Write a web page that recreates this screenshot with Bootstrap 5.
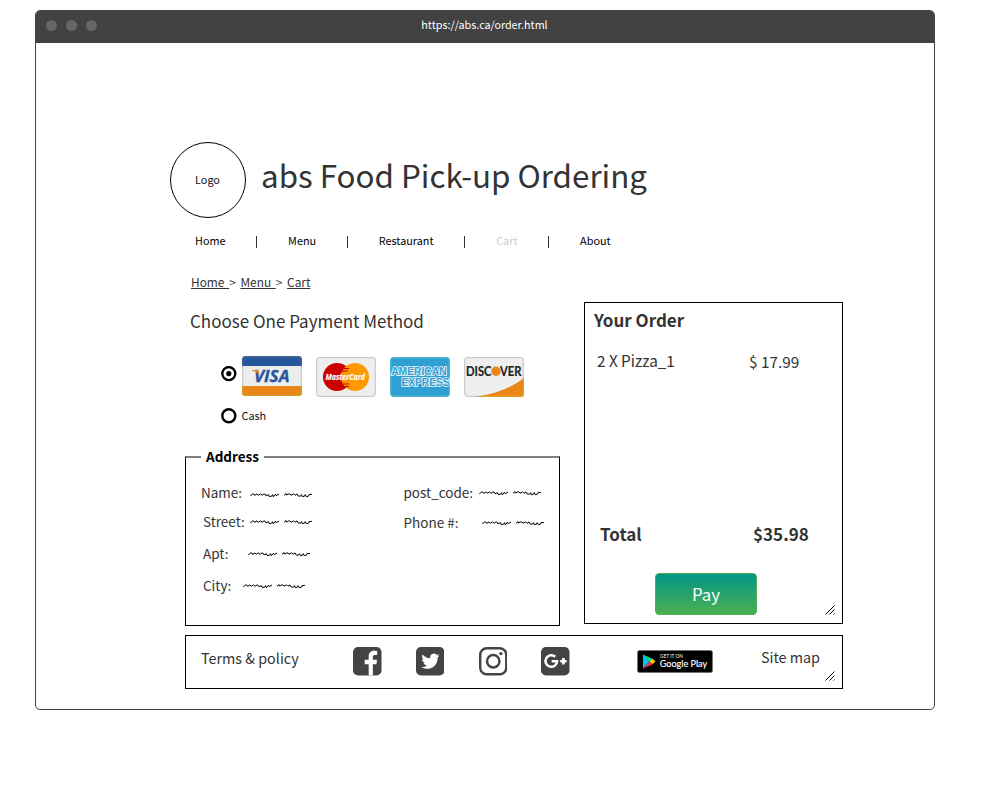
<!DOCTYPE html>
<html lang="en">
<head>
<meta charset="utf-8">
<meta name="viewport" content="width=device-width, initial-scale=1">
<title>abs Food Pick-up Ordering</title>
<link href="https://cdn.jsdelivr.net/npm/bootstrap@5.3.0/dist/css/bootstrap.min.css" rel="stylesheet">
<style>
body{font-family:"Noto Sans CJK SC","Noto Sans",sans-serif;color:#333;background:#fff;padding:10px 0 0 35px}
.browser{width:900px;height:700px;border:1px solid #424242;border-radius:5px;overflow:hidden}
.titlebar{height:32px;background:#424242;color:#fff;font-size:10.75px;line-height:16px;padding:0 10px}
.titlebar .dots{width:80px;gap:9px;margin:-3px 0 0}
.titlebar i{width:11px;height:11px;border-radius:50%;background:#666}
.titlebar .address-bar{padding-right:81px;margin-top:-4px}
.page{padding:99px 91px 0 149px}
.masthead{margin-left:-15px;height:76px}
.logo{width:76px;height:76px;border:1px solid #000;font-size:10.85px;color:#111;padding:0 1px 2px 0}
.masthead h1{font-size:31.35px;line-height:40px;margin:13px 0 0 15px;font-weight:400;white-space:nowrap;color:#333}
.main-links{height:18px;margin-top:14px;padding-left:10px;gap:30.8px;font-size:10.85px;line-height:18px}
.main-links a{color:#000;margin-top:-2px}
.main-links a.off{color:#ccc}
.main-links i{width:1px;height:12px;background:#333;margin-top:1px}
.crumbs{margin-top:24px;padding-left:6px;font-size:11.9px;line-height:16px;height:16px;white-space:pre;word-spacing:2px}
.crumbs a{color:#333;text-decoration:underline;text-underline-offset:1px}
.columns{margin-top:12px;gap:24px;height:324px}
.left{width:375px;padding-top:7px}
h2{font-size:17px;line-height:24px;margin:0;color:#333;font-weight:400}
.left h2{padding-left:5px}
.pay-row{padding-left:36px}
.methods{margin-top:23px;height:41px}
.methods .radio{margin:10px 5px 0 0}
.methods .cc{width:60px;height:40px;margin-right:14px;overflow:visible}
.methods .lower{margin-top:1px}
.cash{margin-top:10px;height:17px;gap:4.5px;font-size:10.85px;line-height:16px;color:#111}
.addr{margin-top:32px;height:170px;border:1px solid #000;border-top:2px solid gray;padding:0 15px}
.addr .legend-text{background:#fff;font-size:13.5px;line-height:20px;font-weight:700;color:#000;padding:0 5px;width:63px;margin-top:-12px}
.fields{font-size:13.5px;line-height:20px;padding-top:16px}
.fields .colA{width:204px}
.fields .f1{height:29px}
.fields .f1 span{width:49px}
.fields .f2{margin-left:2px;height:32px}
.fields .f2 span{width:47px}
.fields .f3 span{width:45px}
.fields .f4 span{width:40px}
.fields .f5{height:30px}
.fields .f5 span{width:75.5px}
.fields .f6 span{width:78.5px}
.scribble{width:62px;height:6px;margin-top:8px}
.f1 .scribble{margin-top:10px}
.order{width:259px;height:322px;border:1px solid #000;padding:5px 7px 0 9px}
.order h2,.total{font-weight:700}
.item{margin-top:16px;padding-left:3px;font-size:15.3px;line-height:24px}
.item span:first-child{width:152px}
.item span:last-child{margin-top:1px}
.total{margin-top:149px;padding-left:6px;font-size:17.05px;line-height:24px}
.total span:first-child{width:153px}
.pay-btn,.pay-btn:hover{width:102px;height:42px;margin:27px 0 0 61px;padding:0;border:1px solid #4caf50;border-radius:4px;background:linear-gradient(#009688,#4caf50);color:#fff;font-size:16.8px;line-height:40px}
.grip{width:10px;height:10px}
.foot{margin-top:9px;height:54px;border:1px solid #000;padding-left:15px;font-size:14.35px;line-height:24px}
.foot .terms{width:152px;margin-top:10px}
.foot .social{gap:34.3px;margin-top:11px}
.foot .social svg{width:28.5px;height:28.5px}
.foot .gplay{width:76px;height:23px;margin:13.5px 0 0 67px}
.foot .sitemap{margin:9px 0 0 48px;width:64px}
.foot .grip{margin-top:34.5px}
</style>
</head>
<body>
<svg class="d-none">
  <symbol id="scrib" viewBox="0 0 62 6"><g fill="none" stroke="#000" stroke-width="1" stroke-linecap="round" stroke-linejoin="round">
    <path d="M.6 3.500 2.800 1.900 4 2.200 4.600 3.400 7 1.900 8.300 3.300 10.500 1.900 12 3.300 14 1.900 15.500 2.500 16 3.900 18.300 2.600 19 4.400 21.500 4.300 22.600 2.600 23.300 4.800 25.500 2.200 26.200 3.700 28.700 2.200"/>
    <path d="M34.300 3.100 36 1.500 36.600 3.100 38.500 1.900 40 2 41 3.300 43.500 1.800 45 3.300 47 1.900 48.200 4 50.500 4.200 51.600 2.600 52.300 4.700 54.500 4.200 55.200 2.600 56.300 4.700 58.300 4.300 59 2.600 61.500 2.400"/></g></symbol>
  <symbol id="gripmark" viewBox="0 0 10 10"><path d="M.5 9.500l9-9M4.500 9.500l5-5M8.500 9.500l1-1" stroke="#000" fill="none"/></symbol>
</svg>
<div class="browser">
  <div class="titlebar d-flex align-items-center">
    <div class="dots d-flex"><i></i><i></i><i></i></div>
    <div class="address-bar flex-grow-1 text-center">https://abs.ca/order.html</div>
  </div>
  <div class="page">
    <header class="masthead d-flex">
      <div class="logo rounded-circle d-flex align-items-center justify-content-center">Logo</div>
      <h1>abs Food Pick-up Ordering</h1>
    </header>
    <nav class="main-links d-flex align-items-center">
      <a class="text-decoration-none" href="#">Home</a><i></i>
      <a class="text-decoration-none" href="#">Menu</a><i></i>
      <a class="text-decoration-none" href="#">Restaurant</a><i></i>
      <a class="text-decoration-none off" href="#">Cart</a><i></i>
      <a class="text-decoration-none" href="#">About</a>
    </nav>
    <nav class="crumbs"><a href="#">Home </a>&gt; <a href="#">Menu </a>&gt; <a href="#">Cart</a></nav>

    <main class="columns d-flex align-items-start">
      <section class="left">
        <h2>Choose One Payment Method</h2>
        <div class="methods pay-row d-flex align-items-start">
          <svg class="radio flex-shrink-0" width="16" height="16" viewBox="0 0 16 16"><circle cx="7.8" cy="7.6" r="6.5" fill="#fff" stroke="#000" stroke-width="2.4"/><circle cx="7.8" cy="7.6" r="2.6"/></svg>
          <svg class="cc flex-shrink-0" viewBox="0 0 60 40"><rect width="60" height="40" rx="3.5" fill="#ededed"/><path d="M0 10V3.5Q0 0 3.5 0h53Q60 0 60 3.5V10z" fill="#26569b"/><path d="M0 30h60v6.500q0 3.500-3.500 3.500h-53Q0 40 0 36.500z" fill="#ea8618"/><rect x=".7" y=".7" width="58.600" height="38.600" rx="3" fill="none" stroke="#888" stroke-opacity=".3" stroke-width="1.400"/><path d="M.7 30v6.500q0 2.800 2.800 2.800h53q2.800 0 2.800-2.800V30" fill="none" stroke="#d99c1c" stroke-width="1.200"/><text x="12" y="25.700" textLength="35.500" lengthAdjust="spacingAndGlyphs" font-family="Open Sans,sans-serif" font-size="16.500" font-weight="700" font-style="italic" fill="#26569b" stroke="#26569b" stroke-width=".3">VISA</text><path d="M9.800 14h5.500q1.200 0 1.600 1.500l.8 4q-2-3.800-7.900-5.100z" fill="#ea8618"/></svg>
          <svg class="cc lower flex-shrink-0" viewBox="0 0 60 40"><rect x=".7" y=".7" width="58.600" height="38.600" rx="3" fill="#eee" stroke="#ccc" stroke-width="1.300"/><circle cx="21" cy="20" r="14" fill="#c00"/><circle cx="39" cy="20" r="14" fill="#f90"/><path d="M27 11.500h6M26 14h6M26 27h7M27 29.500h6" stroke="#c00" stroke-width="1.200"/><text x="9.500" y="23.300" textLength="39.500" lengthAdjust="spacingAndGlyphs" font-family="Open Sans,sans-serif" font-size="9.600" font-weight="700" font-style="italic" fill="#fff" stroke="#fff" stroke-width=".2">MasterCard</text></svg>
          <svg class="cc lower flex-shrink-0" viewBox="0 0 60 40"><rect x=".7" y=".7" width="58.600" height="38.600" rx="3" fill="#309fd1" stroke="#49b7cf" stroke-width="1.400"/><g font-family="Liberation Sans,sans-serif" font-weight="700" font-size="10.500" fill="#309fd1" stroke="#eef8fc" stroke-width="1.700" paint-order="stroke"><text x="1.200" y="18" textLength="55.500" lengthAdjust="spacingAndGlyphs">AMERICAN</text><text x="11.500" y="29" textLength="48" lengthAdjust="spacingAndGlyphs">EXPRESS</text></g></svg>
          <svg class="cc lower flex-shrink-0 me-0" viewBox="0 0 60 40"><rect x=".7" y=".7" width="58.600" height="38.600" rx="3" fill="#eee" stroke="#ccc" stroke-width="1.300"/><path d="M11 40Q42 35.500 60 21v15.500q0 3.500-3.500 3.500z" fill="#ea8618"/><path d="M15 39.400h41.500q2.900 0 2.900-2.900V22" fill="none" stroke="#e0a51e"/><circle cx="32" cy="14.300" r="4.700" fill="#ea8618"/><g font-family="Lato,sans-serif" font-size="12.500" font-weight="700" fill="#222" stroke="#222" stroke-width=".2"><text x="2" y="18.700" textLength="25.500" lengthAdjust="spacingAndGlyphs">DISC</text><text x="36" y="18.700" textLength="21.500" lengthAdjust="spacingAndGlyphs">VER</text></g></svg>
        </div>
        <div class="cash pay-row d-flex"><svg width="16" height="17" viewBox="0 0 16 17"><circle cx="7.800" cy="8.700" r="6.500" fill="#fff" stroke="#000" stroke-width="2.400"/></svg><span>Cash</span></div>
        <div class="addr">
          <div class="legend-text">Address</div>
          <div class="fields d-flex">
            <div class="colA">
              <div class="f1 d-flex"><span>Name:</span><svg class="scribble"><use href="#scrib"/></svg></div>
              <div class="f2 d-flex"><span>Street:</span><svg class="scribble"><use href="#scrib"/></svg></div>
              <div class="f2 f3 d-flex"><span>Apt:</span><svg class="scribble"><use href="#scrib"/></svg></div>
              <div class="f2 f4 d-flex"><span>City:</span><svg class="scribble"><use href="#scrib"/></svg></div>
            </div>
            <div>
              <div class="f5 d-flex"><span>post_code:</span><svg class="scribble"><use href="#scrib"/></svg></div>
              <div class="f6 d-flex"><span>Phone #:</span><svg class="scribble"><use href="#scrib"/></svg></div>
            </div>
          </div>
        </div>
      </section>
      <aside class="order">
        <h2>Your Order</h2>
        <div class="item d-flex"><span>2 X Pizza_1</span><span>$ 17.99</span></div>
        <div class="total d-flex"><span>Total</span><span>$35.98</span></div>
        <div class="d-flex justify-content-between">
          <button class="btn pay-btn" type="button">Pay</button>
          <svg class="grip align-self-end"><use href="#gripmark"/></svg>
        </div>
      </aside>
    </main>

    <footer class="foot d-flex align-items-start">
      <span class="terms">Terms &amp; policy</span>
      <div class="social d-flex">
        <svg viewBox="0 0 28 28"><rect width="28" height="28" rx="5" fill="#444"/><path d="M15.400 28V17h-3.900v-4.400h3.900V9.400c0-3.700 2.200-5.600 5.500-5.600 1.400 0 2.500.1 2.900.2v3.900h-2.200c-1.800 0-2.100.9-2.100 2.100v2.600h4.100l-.6 4.400h-3.500v11z" fill="#fff"/></svg>
        <svg viewBox="0 0 28 28"><rect width="28" height="28" rx="5" fill="#444"/><path d="M23.200 8.300c-.6.300-1.300.5-2.100.6.700-.4 1.300-1.100 1.600-2-.7.400-1.500.7-2.300.9a3.700 3.700 0 0 0-6.400 3.300c-3-.1-5.700-1.600-7.500-3.800-1 1.600-.5 3.800 1.100 4.900-.6 0-1.200-.2-1.600-.4 0 1.800 1.200 3.300 2.900 3.700-.5.100-1.100.1-1.600 0 .5 1.500 1.800 2.500 3.400 2.600A7.600 7.600 0 0 1 5.300 19.600c6.600 4.300 16.200.3 16-9.400.7-.5 1.400-1.200 1.900-1.900z" fill="#fff"/></svg>
        <svg viewBox="0 0 28 28" fill="none" stroke="#444" stroke-width="2.400"><rect x="1.200" y="1.200" width="25.600" height="25.600" rx="6.500"/><circle cx="14" cy="14" r="6.100"/><circle cx="21.500" cy="6.500" r="1.700" fill="#444" stroke="none"/></svg>
        <svg viewBox="0 0 28 28"><rect width="28" height="28" rx="5" fill="#444"/><path d="M14 9.600A5.700 5.700 0 1 0 15.800 14h-5.300M22 10.900v6.200M18.900 14h6.200" fill="none" stroke="#fff" stroke-width="2.500"/></svg>
      </div>
      <svg class="gplay flex-shrink-0" viewBox="0 0 76 23"><rect x=".3" y=".3" width="75.400" height="22.400" rx="2.500" fill="#000" stroke="#a6a6a6" stroke-width=".6"/><path d="M6 4.500v14l6.500-7z" fill="#00c3f5"/><path d="M6 4.500l10 4.600-3.500 2.600z" fill="#00e07a"/><path d="M15.500 8.800l3 2.700-3 2.700-3-2.700z" fill="#ffc400"/><path d="M6 18.500l6.500-7 3.300 2.700z" fill="#f0364b"/><g fill="#fff" font-family="Lato,sans-serif"><text x="23" y="7.600" font-size="4.800" textLength="23" lengthAdjust="spacingAndGlyphs">GET IT ON</text><text x="22.700" y="17" font-size="9.500" font-weight="400" stroke="#fff" stroke-width=".15" textLength="47.500" lengthAdjust="spacingAndGlyphs">Google Play</text></g></svg>
      <span class="sitemap">Site map</span>
      <svg class="grip"><use href="#gripmark"/></svg>
    </footer>
  </div>
</div>
<script src="https://cdn.jsdelivr.net/npm/bootstrap@5.3.0/dist/js/bootstrap.bundle.min.js"></script>
</body>
</html>
